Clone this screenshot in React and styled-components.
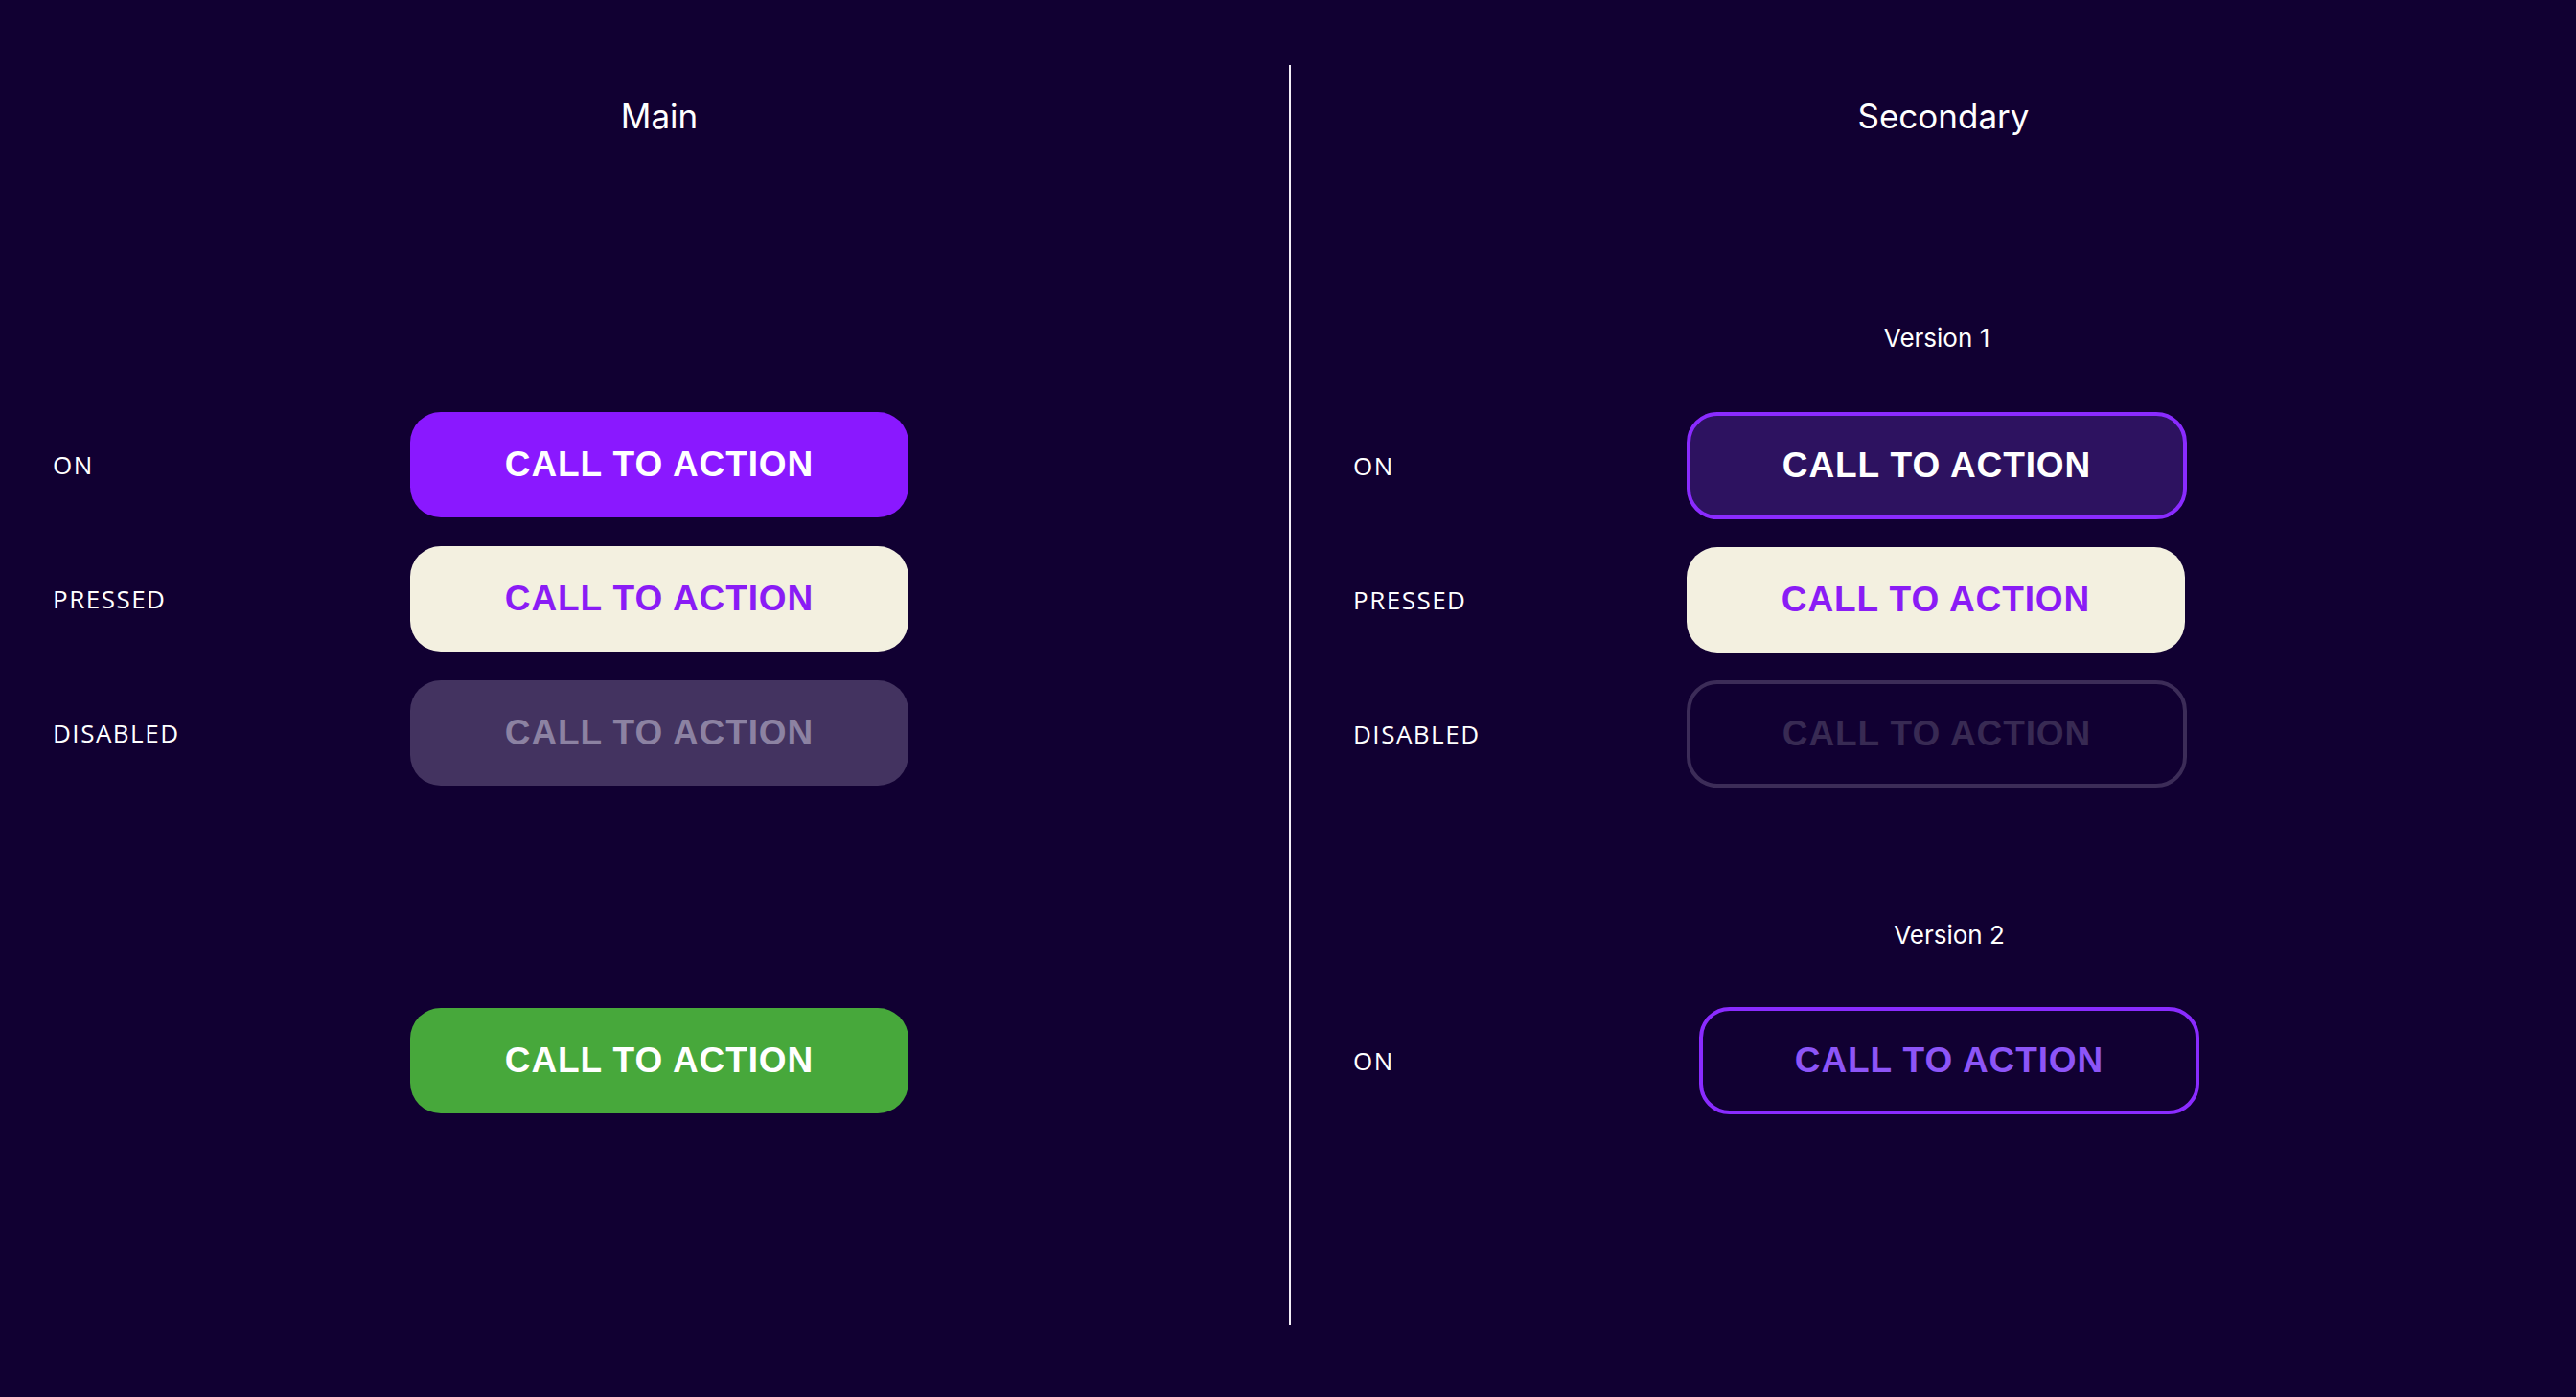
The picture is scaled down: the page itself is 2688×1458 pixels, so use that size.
import React from "react";
import styled, { createGlobalStyle, css } from "styled-components";

const Global = createGlobalStyle`
  html, body { margin: 0; padding: 0; background: #110032; }
  body { min-height: 1458px; }
  * { box-sizing: border-box; }
`;

const Page = styled.div`
  display: flex;
  width: 2688px;
  height: 1458px;
  background: #110032;
  color: #ffffff;
`;

const Panel = styled.section`
  display: flex;
  flex-direction: column;
  width: ${(p) => p.$width}px;
  padding-top: 99px;
  padding-left: ${(p) => p.$pad}px;
`;

const Divider = styled.div`
  width: 2px;
  height: 1315px;
  margin-top: 68px;
  background: #f4eef7;
  flex-shrink: 0;
`;

const Title = styled.h2`
  margin: 0;
  margin-left: ${(p) => p.$indent}px;
  width: ${(p) => p.$w}px;
  text-align: center;
  font-family: Inter, "Liberation Sans", sans-serif;
  font-weight: 400;
  font-size: 35px;
  line-height: 44px;
  color: #ffffff;
`;

const SubTitle = styled.h3`
  margin: ${(p) => p.$top}px 0 0 ${(p) => p.$indent}px;
  width: ${(p) => p.$w}px;
  text-align: center;
  font-family: Inter, "Liberation Sans", sans-serif;
  font-weight: 400;
  font-size: 26px;
  line-height: 28px;
  color: #ffffff;
`;

const Rows = styled.div`
  display: flex;
  flex-direction: column;
  gap: ${(p) => p.$gap}px;
  margin-top: ${(p) => p.$top}px;
`;

const Row = styled.div`
  display: grid;
  grid-template-columns: ${(p) => p.$labelW}px auto;
  align-items: center;
  height: ${(p) => p.$h}px;
`;

const Label = styled.span`
  font-family: "Open Sans", Lato, sans-serif;
  font-size: 26px;
  font-weight: 400;
  letter-spacing: 1.5px;
  color: #ffffff;
`;

const variants = {
  on: css`
    background: #8a18ff;
    color: #ffffff;
    border: none;
  `,
  pressed: css`
    background: #f3f0e0;
    color: #8a1cf5;
    border: none;
  `,
  disabled: css`
    background: #433360;
    color: #8c82a2;
    border: none;
  `,
  success: css`
    background: #47a83b;
    color: #ffffff;
    border: none;
  `,
  outlineOn: css`
    background: #2d1260;
    color: #ffffff;
    border: 4px solid #8a2bff;
  `,
  outlinePressed: css`
    background: #f3f0e0;
    color: #8a1cf5;
    border: none;
  `,
  outlineDisabled: css`
    background: transparent;
    color: #382a53;
    border: 4px solid #3c2c58;
  `,
  ghost: css`
    background: transparent;
    color: #8d55f7;
    border: 4px solid #8a2bff;
  `,
};

const Button = styled.button`
  display: flex;
  align-items: center;
  justify-content: center;
  width: ${(p) => p.$w}px;
  height: ${(p) => p.$h}px;
  margin-left: ${(p) => p.$shift || 0}px;
  padding: 0;
  border-radius: 32px;
  font-family: "Liberation Sans", Arial, sans-serif;
  font-weight: 700;
  font-size: 37px;
  letter-spacing: 0.9px;
  cursor: pointer;
  ${(p) => variants[p.$variant]}
`;

const CTA = "CALL TO ACTION";

const mainRows = [
  { label: "ON", variant: "on" },
  { label: "PRESSED", variant: "pressed" },
  { label: "DISABLED", variant: "disabled" },
];

const secondaryRows = [
  { label: "ON", variant: "outlineOn", w: 522, h: 112 },
  { label: "PRESSED", variant: "outlinePressed", w: 520, h: 110 },
  { label: "DISABLED", variant: "outlineDisabled", w: 522, h: 112 },
];

export default function App() {
  return (
    <>
      <Global />
      <Page>
        <Panel $width={1345} $pad={55}>
          <Title $indent={373} $w={520}>Main</Title>
          <Rows $gap={30} $top={287}>
            {mainRows.map((r) => (
              <Row key={r.label} $labelW={373} $h={110}>
                <Label>{r.label}</Label>
                <Button $variant={r.variant} $w={520} $h={110}>{CTA}</Button>
              </Row>
            ))}
          </Rows>
          <Rows $gap={0} $top={232}>
            <Row $labelW={373} $h={110}>
              <span />
              <Button $variant="success" $w={520} $h={110}>{CTA}</Button>
            </Row>
          </Rows>
        </Panel>
        <Divider />
        <Panel $width={1341} $pad={65}>
          <Title $indent={355} $w={522}>Secondary</Title>
          <SubTitle $top={196} $indent={348} $w={522}>Version 1</SubTitle>
          <Rows $gap={28} $top={63}>
            {secondaryRows.map((r) => (
              <Row key={r.label} $labelW={348} $h={112}>
                <Label>{r.label}</Label>
                <Button $variant={r.variant} $w={r.w} $h={r.h}>{CTA}</Button>
              </Row>
            ))}
          </Rows>
          <SubTitle $top={140} $indent={361} $w={522}>Version 2</SubTitle>
          <Rows $gap={0} $top={61}>
            <Row $labelW={348} $h={112}>
              <Label>ON</Label>
              <Button $variant="ghost" $w={522} $h={112} $shift={13}>{CTA}</Button>
            </Row>
          </Rows>
        </Panel>
      </Page>
    </>
  );
}
